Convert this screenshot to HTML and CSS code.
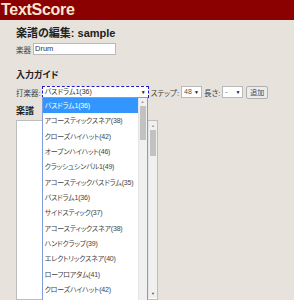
FILE: index.html
```html
<!DOCTYPE html>
<html lang="ja">
<head>
    <meta charset="UTF-8">
    <title>TextScore</title>
    <link rel="stylesheet" href="styles.css">
</head>
<body>
<div class="header">TextScore</div>
<div class="main">
    <h1 class="page-title">楽譜の編集: sample</h1>
    <div class="field">
        <label class="small-label">楽器</label>
        <span class="text-input">Drum</span>
    </div>

    <h2 class="section-title guide-title">入力ガイド</h2>
    <div class="guide-row">
        <label class="small-label">打楽器:</label>
        <div class="select-wrap">
            <span class="select select-focus">バスドラム1(36)<span class="arrow">▼</span></span>
            <div class="dropdown">
                <div class="dropdown-items">
                    <div class="item selected">バスドラム1(36)</div>
                    <div class="item">アコースティックスネア(38)</div>
                    <div class="item">クローズハイハット(42)</div>
                    <div class="item">オープンハイハット(46)</div>
                    <div class="item">クラッシュシンバル1(49)</div>
                    <div class="item">アコースティックバスドラム(35)</div>
                    <div class="item">バスドラム1(36)</div>
                    <div class="item">サイドスティック(37)</div>
                    <div class="item">アコースティックスネア(38)</div>
                    <div class="item">ハンドクラップ(39)</div>
                    <div class="item">エレクトリックスネア(40)</div>
                    <div class="item">ローフロアタム(41)</div>
                    <div class="item">クローズハイハット(42)</div>
                </div>
                <div class="scrollbar">
                    <span class="sb-arrow">▲</span>
                    <span class="sb-thumb"></span>
                </div>
            </div>
        </div>
        <label class="small-label">ステップ:</label>
        <span class="select select-small">48<span class="arrow">▼</span></span>
        <label class="small-label">長さ:</label>
        <span class="select select-small">-<span class="arrow">▼</span></span>
        <span class="button">追加</span>
    </div>

    <h2 class="section-title score-title">楽譜</h2>
    <div class="textarea">
        <div class="scrollbar ta-scrollbar">
            <span class="sb-arrow">▲</span>
            <span class="sb-thumb"></span>
            <span class="sb-arrow sb-bottom">▼</span>
        </div>
    </div>
</div>
</body>
</html>
```

FILE: styles.css
```css
body, html {
    margin: 0;
    height: 100%;
    overflow: hidden;
}
body {
    background-color: #e7e2dc;
    font-family: "Liberation Sans", "Noto Sans CJK JP", sans-serif;
    color: #222;
}
.header {
    background-color: #8b0000;
    color: #f8e7cf;
    font-weight: bold;
    font-size: 16px;
    line-height: 20px;
    height: 20px;
    padding-left: 1px;
    letter-spacing: -0.3px;
}
.main {
    padding: 0 16px;
}
.page-title {
    font-size: 11px;
    line-height: 14px;
    margin: 6px 0 0;
    font-feature-settings: "palt";
}
.field {
    display: flex;
    align-items: center;
    gap: 2px;
    margin-top: 3px;
    height: 12px;
}
.small-label {
    font-size: 7.5px;
    color: #444;
    white-space: nowrap;
    flex-shrink: 0;
    font-feature-settings: "palt";
}
.text-input {
    width: 80px;
    height: 10px;
    border: 1px solid #b9b9b9;
    background: #fff;
    font-size: 7.5px;
    line-height: 10px;
    padding-left: 1px;
    color: #333;
}
.section-title {
    font-size: 9px;
    line-height: 12px;
    margin: 0;
    font-feature-settings: "palt";
}
.guide-title {
    margin-top: 14px;
}
.guide-row {
    display: flex;
    align-items: center;
    gap: 2px;
    margin-top: 5px;
    height: 12px;
    white-space: nowrap;
}
.select-wrap {
    position: relative;
    flex-shrink: 0;
    margin-left: -1px;
}
.select {
    display: flex;
    align-items: center;
    justify-content: space-between;
    flex-shrink: 0;
    height: 10px;
    border: 1px solid #b9b9b9;
    background: #fff;
    font-size: 7px;
    line-height: 10px;
    padding: 0 2px;
    color: #555;
    box-sizing: content-box;
    font-feature-settings: "palt";
}
.select-focus {
    width: 101px;
    border: 1px dashed #1a1acc;
    color: #333;
}
.select-small {
    width: 15px;
}
.arrow {
    font-size: 5px;
    color: #111;
}
.button {
    display: inline-block;
    flex-shrink: 0;
    height: 11px;
    line-height: 11px;
    padding: 0 3px;
    border: 1px solid #b0b0b0;
    border-radius: 2px;
    background: #ececec;
    font-size: 7px;
    color: #444;
    margin-left: 1px;
}
.dropdown {
    position: absolute;
    left: 0;
    top: 11px;
    width: 104px;
    height: 204px;
    background: #fff;
    border: 1px solid #7f9ddb;
    display: flex;
    z-index: 2;
}
.dropdown-items {
    flex: 1;
    overflow: hidden;
}
.item {
    height: 15.35px;
    line-height: 15px;
    font-size: 7px;
    padding-left: 2px;
    color: #444;
    white-space: nowrap;
    letter-spacing: -0.2px;
    font-feature-settings: "palt";
}
.item.selected {
    background: #3396ff;
    color: #fff;
}
.scrollbar {
    width: 8px;
    flex-shrink: 0;
    background: #f0f0f0;
    display: flex;
    flex-direction: column;
    align-items: center;
    border-left: 1px solid #e4e4e4;
}
.sb-arrow {
    font-size: 4px;
    line-height: 8px;
    color: #999;
}
.sb-thumb {
    width: 6px;
    height: 34px;
    background: #c2c2c2;
}
.score-title {
    margin-top: 7px;
}
.textarea {
    margin-top: 3px;
    width: 140px;
    height: 178px;
    background: #fff;
    border: 1px solid #bdbdbd;
    display: flex;
    justify-content: flex-end;
}
.ta-scrollbar {
    height: 176px;
    padding-top: 1px;
}
.ta-scrollbar .sb-thumb {
    height: 26px;
}
.sb-bottom {
    margin-top: auto;
    color: #555;
}
```
